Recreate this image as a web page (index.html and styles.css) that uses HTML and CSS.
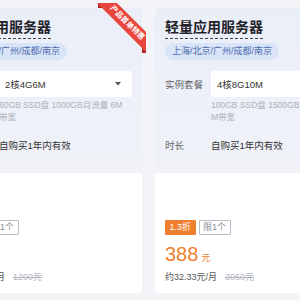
FILE: index.html
```html
<!DOCTYPE html>
<html lang="zh-CN">
<head>
    <meta charset="UTF-8">
    <meta name="viewport" content="width=device-width, initial-scale=1.0">
    <title>轻量应用服务器</title>
    <link rel="stylesheet" href="styles.css">
</head>
<body>
    <div class="cards">
        <!-- 2核4G -->
        <div class="card">
            <div class="ribbon"><span>产品首单特惠</span></div>
            <div class="card-top">
                <h3 class="title">轻量应用服务器</h3>
                <span class="region">上海/北京/广州/成都/南京</span>
                <div class="row">
                    <span class="label">实例套餐</span>
                    <div class="select">
                        <span>2核4G6M</span>
                        <svg class="caret" width="6" height="4" viewBox="0 0 6 4"><path d="M0 0h6L3 3.5z" fill="#555"/></svg>
                    </div>
                </div>
                <p class="desc">60GB SSD盘 1000GB月流量 6M带宽</p>
                <div class="row row-time">
                    <span class="label">时长</span>
                    <span class="value">自购买1年内有效</span>
                </div>
            </div>
            <div class="card-bottom">
                <div class="tags">
                    <span class="tag tag-off">1.7折</span>
                    <span class="tag tag-limit">限1个</span>
                </div>
                <div class="price">199<span class="unit">元</span></div>
                <div class="monthly">约16.58元/月<s class="origin">1200元</s></div>
            </div>
        </div>

        <!-- 4核8G -->
        <div class="card">
            <div class="card-top">
                <h3 class="title">轻量应用服务器</h3>
                <span class="region">上海/北京/广州/成都/南京</span>
                <div class="row">
                    <span class="label">实例套餐</span>
                    <div class="select">
                        <span>4核8G10M</span>
                        <svg class="caret" width="6" height="4" viewBox="0 0 6 4"><path d="M0 0h6L3 3.5z" fill="#555"/></svg>
                    </div>
                </div>
                <p class="desc">100GB SSD盘 1500GB月流量 10M带宽</p>
                <div class="row row-time">
                    <span class="label">时长</span>
                    <span class="value">自购买1年内有效</span>
                </div>
            </div>
            <div class="card-bottom">
                <div class="tags">
                    <span class="tag tag-off">1.3折</span>
                    <span class="tag tag-limit">限1个</span>
                </div>
                <div class="price">388<span class="unit">元</span></div>
                <div class="monthly">约32.33元/月<s class="origin">3060元</s></div>
            </div>
        </div>
    </div>
</body>
</html>
```

FILE: styles.css
```css
html, body {
    overflow: hidden;
}

body {
    margin: 0;
    background-color: #f3f4f8;
    font-family: "Liberation Sans", "Noto Sans CJK SC", sans-serif;
    color: #333;
}

.cards {
    display: flex;
    gap: 13px;
    margin-left: -57px;
    padding-top: 8px;
}

.card {
    flex: 0 0 199px;
    position: relative;
    background-color: #fff;
    border-radius: 4px;
}

.card + .card {
    flex-basis: 198px;
}

.card-top {
    padding: 9px 10px 20px;
    border-radius: 4px 4px 0 0;
    background: linear-gradient(180deg, #eaeef7 0%, #f0f2f8 100%);
}

.title {
    width: fit-content;
    margin: 0;
    padding-bottom: 1px;
    font-size: 14px;
    line-height: 20px;
    font-weight: 600;
    color: #1f2329;
    border-bottom: 1px dashed #444;
}

.region {
    display: block;
    width: fit-content;
    margin-top: 4px;
    padding: 0 7px;
    height: 17px;
    line-height: 17px;
    border-radius: 9px;
    background-color: #dae4f8;
    color: #4b6cae;
    font-size: 9px;
}

.row {
    display: flex;
    align-items: center;
    margin-top: 11px;
    font-size: 9.5px;
}

.label {
    width: 46px;
    flex-shrink: 0;
    color: #666;
}

.select {
    flex: 1;
    height: 26px;
    padding: 0 11px 0 6px;
    display: flex;
    align-items: center;
    justify-content: space-between;
    background-color: #fff;
    border-radius: 2px;
    color: #333;
}

.desc {
    margin: 2px 3px 0 46px;
    font-size: 8.5px;
    line-height: 12px;
    color: #abb0bb;
    word-break: break-all;
}

.row-time {
    margin-top: 16px;
    line-height: 14px;
}

.value {
    color: #333;
}

.card-bottom {
    padding: 47px 10px 9px;
}

.tags {
    display: flex;
    gap: 3px;
}

.tag {
    box-sizing: border-box;
    height: 15px;
    line-height: 13px;
    padding: 0 3.5px;
    font-size: 9px;
    border: 1px solid transparent;
    border-radius: 1px;
}

.tag-off {
    background-color: #ef7f2e;
    border-color: #ef7f2e;
    color: #fff;
}

.tag-limit {
    border-color: #b9bdc8;
    color: #888c97;
}

.price {
    margin-top: 7px;
    font-size: 20px;
    line-height: 24px;
    color: #ef7f2e;
}

.unit {
    margin-left: 3px;
    font-size: 9px;
}

.monthly {
    font-size: 9px;
    line-height: 14px;
    color: #555;
}

.origin {
    margin-left: 8px;
    color: #b3b6bf;
}

/* corner ribbon */
.ribbon {
    position: absolute;
    top: -5px;
    right: -4px;
    width: 58px;
    height: 58px;
    overflow: hidden;
}

.ribbon::before,
.ribbon::after {
    content: "";
    position: absolute;
    background-color: #a9281f;
}

.ribbon::before {
    top: 0;
    left: 10px;
    width: 5px;
    height: 5px;
}

.ribbon::after {
    top: 45px;
    left: 54px;
    width: 4px;
    height: 5px;
}

.ribbon span {
    position: absolute;
    z-index: 1;
    left: -1.5px;
    top: 12.5px;
    width: 80px;
    height: 14px;
    line-height: 14px;
    text-align: center;
    transform: rotate(45deg);
    background-color: #e8453c;
    color: #fff;
    font-size: 7.5px;
    font-weight: 600;
}
```
